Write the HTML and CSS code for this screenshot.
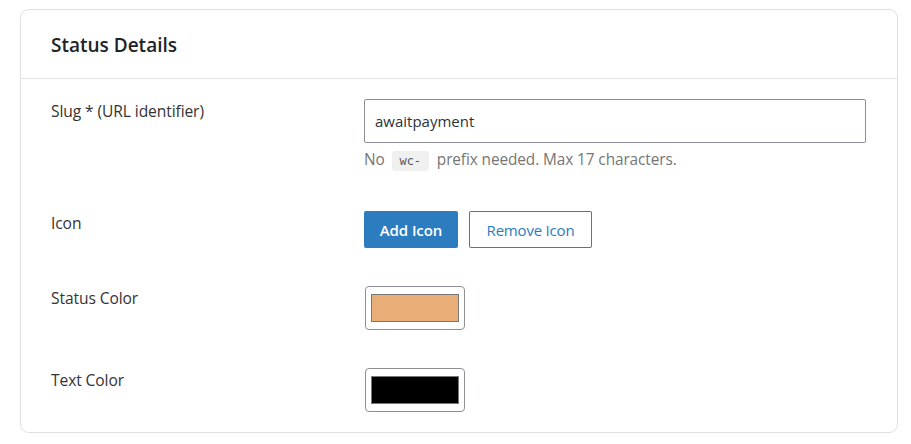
FILE: index.html
```html
<!DOCTYPE html>
<html>
<head>
<meta charset="utf-8">
<link rel="stylesheet" href="styles.css">
</head>
<body>
<div class="card">
  <div class="card-header">
    <h2 class="card-title">Status Details</h2>
  </div>
  <div class="card-body">
    <div class="row">
      <label class="label">Slug * (URL identifier)</label>
      <div class="field">
        <input class="text-input" type="text" value="awaitpayment">
        <p class="help">No <code class="code">wc-</code> prefix needed. Max 17 characters.</p>
      </div>
    </div>
    <div class="row">
      <label class="label">Icon</label>
      <div class="field buttons">
        <button class="btn btn-primary" type="button">Add Icon</button>
        <button class="btn btn-secondary" type="button">Remove Icon</button>
      </div>
    </div>
    <div class="row">
      <label class="label">Status Color</label>
      <div class="field">
        <div class="swatch"><span class="swatch-fill swatch-orange"></span></div>
      </div>
    </div>
    <div class="row">
      <label class="label">Text Color</label>
      <div class="field">
        <div class="swatch"><span class="swatch-fill swatch-black"></span></div>
      </div>
    </div>
  </div>
</div>
</body>
</html>
```

FILE: styles.css
```css
* { box-sizing: border-box; }
html, body { margin: 0; padding: 0; background: #ffffff; }
body {
  font-family: "Open Sans", "Noto Sans", sans-serif;
  color: #333333;
  padding: 9px 13px 0 20px;
}
.card {
  border: 1px solid #e0e0e0;
  border-radius: 9px;
  background: #fff;
  width: 878px;
}
.card-header {
  height: 69px;
  border-bottom: 1px solid #e4e4e4;
  padding: 2px 30px 0;
  display: flex;
  align-items: center;
}
.card-title {
  margin: 0;
  font-size: 19px;
  font-weight: 600;
  color: #1d2327;
}
.card-body {
  padding: 20px 30px 20px;
  display: flex;
  flex-direction: column;
  gap: 38px;
}
.row {
  display: grid;
  grid-template-columns: 313px 1fr;
  align-items: start;
}
.label {
  font-size: 15.6px;
  line-height: 20px;
  padding-top: 2px;
  color: #333;
  letter-spacing: -0.1px;
}
.field { display: flex; flex-direction: column; }
.text-input {
  width: 502px;
  height: 44px;
  border: 1px solid #8c8f94;
  border-radius: 2px;
  padding: 0 10px;
  font-family: inherit;
  font-size: 15px;
  color: #2c3338;
  outline: none;
}
.help {
  margin: 6px 0 2px;
  font-size: 15.4px;
  line-height: 22px;
  height: 22px;
  color: #767676;
  letter-spacing: -0.1px;
}
.code {
  display: inline-block;
  font-family: "DejaVu Sans Mono", "Liberation Mono", monospace;
  font-size: 12px;
  line-height: 20px;
  background: #f0f0f1;
  color: #555;
  padding: 0 8px;
  margin: 0 4px 0 3px;
  border-radius: 3px;
}
.buttons { flex-direction: row; gap: 11px; }
.btn {
  -webkit-appearance: none;
  appearance: none;
  height: 37px;
  border-radius: 2px;
  border: 0;
  font-family: inherit;
  font-size: 15px;
  padding: 0 10px;
  cursor: pointer;
  outline: none;
}
.btn-primary {
  background: #2c7cc0;
  color: #fff;
  font-weight: 600;
  width: 94px;
  letter-spacing: -0.1px;
}
.btn-secondary {
  background: #ffffff;
  box-shadow: inset 0 0 0 1px #2e80c8;
  color: #2b7bc1;
  width: 123px;
  letter-spacing: -0.2px;
}
.swatch {
  width: 100px;
  height: 44px;
  border: 1px solid #8c8f94;
  border-radius: 4px;
  padding: 7px 5px;
  margin-left: 1px;
  display: flex;
}
.swatch-fill {
  flex: 1;
  border: 1px solid #777;
}
.swatch-orange { background: #e9ae77; }
.swatch-black { background: #000; }
```
